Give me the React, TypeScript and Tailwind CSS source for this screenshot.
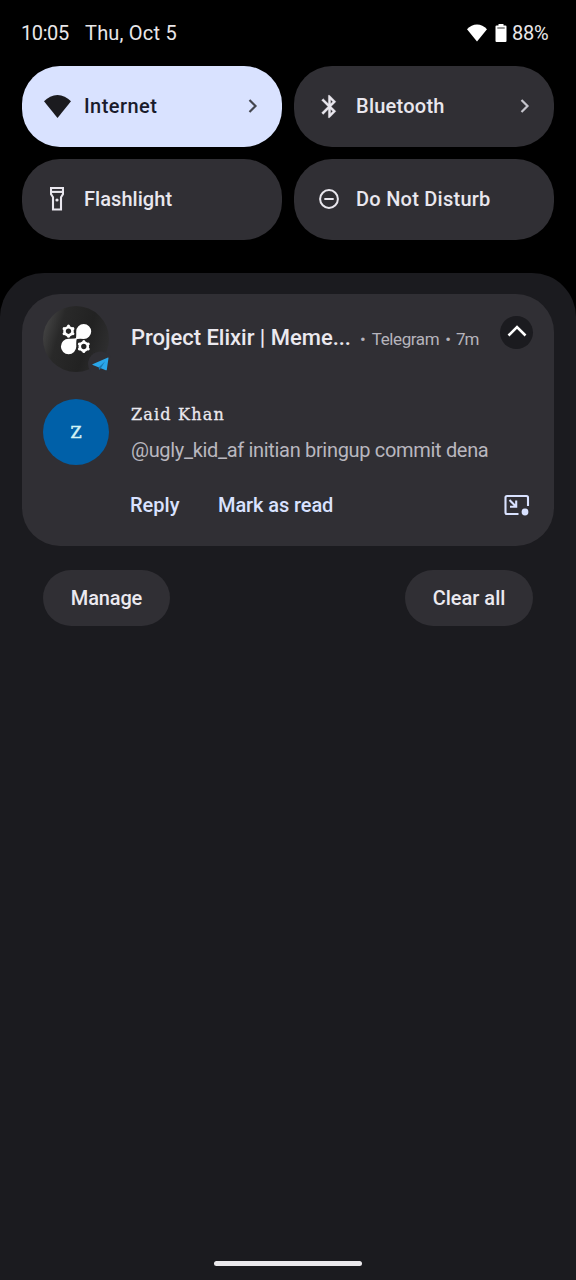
import React from "react";

type TileProps = {
  label: string;
  icon: React.ReactNode;
  active?: boolean;
  arrow?: boolean;
  tracking: string;
};

const WifiIcon = ({ className }: { className: string }) => (
  <svg viewBox="0 0 27 23" className={className} fill="currentColor">
    <path d="M0 6.300C3.800 2.400 8.500 0 13.500 0S23.200 2.400 27 6.300L13.500 23Z" />
  </svg>
);

const BatteryIcon = () => (
  <svg viewBox="0 0 12 18" className="h-[18px] w-[12px]">
    <path d="M3.500 0h5v1.500H10.500Q11.500 1.500 11.500 2.500V17Q11.500 18 10.500 18H1.500Q.5 18 .5 17V2.500Q.5 1.500 1.500 1.500H3.500Z" fill="#fff" />
    <path d="M2.300 4h7.400" stroke="#555" strokeWidth="1.200" />
  </svg>
);

const BluetoothIcon = () => (
  <svg viewBox="0 0 24 24" className="h-[27px] w-[27px]" fill="#e9e7ee" stroke="#e9e7ee" strokeWidth="0.300">
    <path d="M17.710 7.710 12 2h-1v7.590L6.410 5 5 6.410 10.590 12 5 17.590 6.410 19 11 14.410V22h1l5.710-5.710-4.300-4.290 4.300-4.290zM13 5.830l1.880 1.880L13 9.590V5.830zm1.880 10.460L13 18.170v-3.760l1.880 1.880z" />
  </svg>
);

const FlashlightIcon = () => (
  <svg viewBox="0 0 14 24" className="h-[24px] w-[14px]" fill="none" stroke="#e9e7ee" strokeWidth="2.100">
    <path d="M1 1h12v6.200l-2 3V22.500H3V10.200l-2-3Z" />
    <path d="M1 4.900h12" />
    <circle cx="7" cy="13" r="1.600" fill="#e9e7ee" stroke="none" />
  </svg>
);

const DndIcon = () => (
  <svg viewBox="0 0 20 20" className="h-[20px] w-[20px]" fill="none" stroke="#e9e7ee" strokeWidth="2">
    <circle cx="10" cy="10" r="8.900" />
    <path d="M5.300 10h9.400" />
  </svg>
);

const Tile = ({ label, icon, active, arrow, tracking }: TileProps) => {
  return (
    <div
      className={`flex h-[81px] items-center rounded-[38px] pb-px pl-[21px] pr-[24px] ${
        active ? "bg-[#d9e2ff] text-[#1a1b2c]" : "bg-[#302f34] text-[#e9e7ee]"
      }`}
    >
      <div className="flex w-[28px] items-center justify-center">{icon}</div>
      <span className={`ml-[13px] flex-1 whitespace-nowrap text-[20px] font-medium leading-[23px] ${tracking}`}>
        {label}
      </span>
      {arrow ? (
        <svg
          viewBox="0 0 10 14"
          className={`h-[14px] w-[10px] ${active ? "text-[#44464f]" : "text-[#c5c4cc]"}`}
          fill="none"
          stroke="currentColor"
          strokeWidth="2.200"
        >
          <path d="m1.500 1 6 6-6 6" />
        </svg>
      ) : null}
    </div>
  );
};

const StatusBar = () => {
  return (
    <div className="flex h-[66px] items-center pl-[21px] pr-[27px] text-[20px] leading-6 text-[#e9e7e9]">
      <span className="w-[64px] tracking-[-0.400px]">10:05</span>
      <span className="flex-1 tracking-[0.200px]">Thu, Oct 5</span>
      <WifiIcon className="h-[18px] w-[20px] text-white" />
      <div className="ml-[8px] mr-[5px]">
        <BatteryIcon />
      </div>
      <span className="w-[37px] whitespace-nowrap tracking-[-0.200px]">88%</span>
    </div>
  );
};

const gearTeeth = [0, 60, 120, 180, 240, 300];

const Gear = ({ x, y }: { x: number; y: number }) => (
  <g transform={`translate(${x} ${y})`}>
    {gearTeeth.map((angle) => (
      <circle key={angle} cx="0" cy="-5.100" r="1.500" fill="#fff" transform={`rotate(${angle})`} />
    ))}
    <circle r="4" fill="none" stroke="#fff" strokeWidth="2.600" />
  </g>
);

const ChannelAvatar = () => (
  <svg viewBox="0 0 68 66" className="h-[66px] w-[68px]">
    <defs>
      <linearGradient id="sheen" x1="0" y1="0.200" x2="1" y2="0.500">
        <stop offset="0" stopColor="#484848" />
        <stop offset="0.280" stopColor="#292929" />
        <stop offset="0.700" stopColor="#222222" />
        <stop offset="1" stopColor="#2d2d2e" />
      </linearGradient>
    </defs>
    <circle cx="33" cy="33" r="33" fill="url(#sheen)" />
    <circle cx="57.500" cy="58" r="12.500" fill="#302f34" />
    <path d="M32.500 33.500Q33.500 31.500 33.200 25.500a7.500 7.500 0 1 1 7.500 7.500Q35 32.500 32.500 33.500Z" fill="#fff" />
    <path d="M34 32Q33 34 33.300 40.500a7.700 7.700 0 1 1-7.700-7.700Q31.500 33 34 32Z" fill="#fff" />
    <Gear x={25.500} y={25.200} />
    <Gear x={40.800} y={40.500} />
    <path d="M49.500 58.200 65 51.400Q65.600 51.300 65.500 52L63.800 63.800Q63.600 64.600 62.800 64.200L49.800 59Q49 58.600 49.500 58.200Z" fill="#2aa6e9" />
    <path d="M55.800 61.200 62 55.600 58 62.100 56 64Z" fill="#1b78b0" />
  </svg>
);

const BubbleIcon = () => (
  <svg viewBox="0 0 26 22" className="h-[22px] w-[26px]" fill="none" stroke="#d9e2ff" strokeWidth="2.100">
    <path d="M24 12V3.500Q24 2 22.500 2H3Q1.500 2 1.500 3.500V18.500Q1.500 20 3 20H14.500" />
    <path d="m5.500 6 6.200 6.200M12.200 6.500v6.200H6" />
    <circle cx="21" cy="18" r="3.400" fill="#d9e2ff" stroke="none" />
  </svg>
);

const Notification = () => {
  return (
    <div className="h-[252px] rounded-[38px] bg-[#302f34] pl-[21px] pr-[21px] pt-[12px]">
      <div className="flex h-[66px]">
        <ChannelAvatar />
        <div className="ml-[20px] flex flex-1 items-baseline whitespace-nowrap pt-[18px]">
          <span className="w-[229px] text-[22px] font-medium leading-7 tracking-[-0.020px] text-[#ebe9ef]">
            Project Elixir | Meme...
          </span>
          <span className="text-[17px] text-[#b6b4bc]">•</span>
          <span className="ml-[6px] text-[17px] tracking-[-0.400px] text-[#b6b4bc]">Telegram</span>
          <span className="ml-[6px] text-[17px] text-[#b6b4bc]">•</span>
          <span className="ml-[5px] text-[17px] tracking-[-1px] text-[#b6b4bc]">7m</span>
        </div>
        <div className="mt-[10px] flex h-[33px] w-[33px] shrink-0 items-center justify-center rounded-full bg-[#1b1b1f]">
          <svg viewBox="0 0 20 12" className="mb-[3px] h-[12px] w-[20px]" fill="none" stroke="#fff" strokeWidth="2.600">
            <path d="m1.500 10.500 8.500-8.500 8.500 8.500" />
          </svg>
        </div>
      </div>

      <div className="mt-[27px] flex h-[66px]">
        <div className="flex h-[66px] w-[66px] items-center justify-center rounded-full bg-[#0060a8] pt-[2px] font-['DejaVu_Serif',serif] text-[16px] text-[#d3f3f5] [-webkit-text-stroke:0.500px_#d3f3f5]">
          Z
        </div>
        <div className="ml-[22px] flex-1 whitespace-nowrap">
          <p className="pt-[5px] font-['DejaVu_Serif',serif] text-[16px] leading-[22px] tracking-[1.200px] text-[#ebe9ef] [-webkit-text-stroke:0.300px_#ebe9ef]">
            Zaid Khan
          </p>
          <p className="mt-[12px] text-[20px] leading-6 tracking-[-0.320px] text-[#b9b7bf]">
            @ugly_kid_af initian bringup commit dena
          </p>
        </div>
      </div>

      <div className="mt-[28px] flex items-center text-[20px] font-medium leading-6 text-[#d9e2ff]">
        <span className="ml-[87px] w-[88px]">Reply</span>
        <span className="flex-1 tracking-[-0.100px]">Mark as read</span>
        <div className="mr-[3px]">
          <BubbleIcon />
        </div>
      </div>
    </div>
  );
};

const App = () => {
  return (
    <div className="flex h-[1280px] w-[576px] flex-col bg-black font-['Roboto',sans-serif]">
      <StatusBar />
      <div className="grid grid-cols-2 gap-x-[12px] gap-y-[12px] px-[22px]">
        <Tile label="Internet" active arrow tracking="tracking-[0.450px]" icon={<WifiIcon className="h-[23px] w-[27px] text-[#1b1b1f]" />} />
        <Tile label="Bluetooth" arrow tracking="tracking-[0.250px]" icon={<BluetoothIcon />} />
        <Tile label="Flashlight" tracking="tracking-[0.050px]" icon={<FlashlightIcon />} />
        <Tile label="Do Not Disturb" tracking="tracking-[0.250px]" icon={<DndIcon />} />
      </div>

      <div className="mt-[33px] flex flex-1 flex-col rounded-t-[44px] bg-[#1b1b1f] px-[22px] pt-[21px]">
        <Notification />
        <div className="mt-[24px] flex justify-between px-[21px] text-[20px] font-medium text-[#ebe9ef]">
          <button className="h-[56px] w-[127px] rounded-full bg-[#302f34] pb-px tracking-[-0.150px]">Manage</button>
          <button className="h-[56px] w-[128px] rounded-full bg-[#302f34] pb-px">Clear all</button>
        </div>
        <div className="mx-auto mb-[14px] mt-auto h-[5px] w-[148px] rounded-full bg-[#ebe9ec]" />
      </div>
    </div>
  );
};

export default App;
